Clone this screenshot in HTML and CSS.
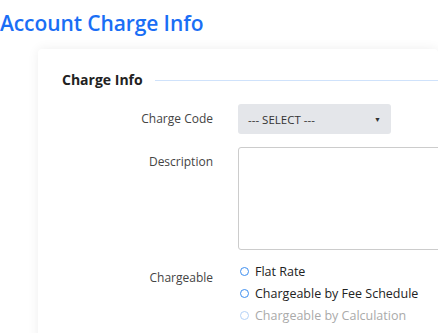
FILE: index.html
```html
<!DOCTYPE html>
<html lang="en">
<head>
    <meta charset="UTF-8">
    <meta name="viewport" content="width=device-width, initial-scale=1.0">
    <title>Account Charge Info</title>
    <link rel="stylesheet" href="styles.css">
</head>
<body>
    <h1 class="page-title">Account Charge Info</h1>
    <div class="card">
        <div class="section-title">
            <span>Charge Info</span>
            <span class="section-line"></span>
        </div>
        <div class="form-row first-row">
            <label class="form-label" for="chargeCode">Charge Code</label>
            <div class="select-box" id="chargeCode">
                <span>--- SELECT ---</span>
                <span class="select-arrow">&#9660;</span>
            </div>
        </div>
        <div class="form-row">
            <label class="form-label label-top" for="description">Description</label>
            <textarea class="text-box" id="description"></textarea>
        </div>
        <div class="form-row radio-row">
            <label class="form-label label-radio">Chargeable</label>
            <div class="radio-group">
                <label class="radio-item"><span class="radio-dot"></span>Flat Rate</label>
                <label class="radio-item"><span class="radio-dot"></span>Chargeable by Fee Schedule</label>
                <label class="radio-item disabled"><span class="radio-dot"></span>Chargeable by Calculation</label>
            </div>
        </div>
    </div>
</body>
</html>
```

FILE: styles.css
```css
/* Basic styles */
body {
    font-family: "Open Sans", "Noto Sans", sans-serif;
    margin: 0;
    padding: 0;
    background-color: #fff;
    overflow: hidden;
}

.page-title {
    margin: 0;
    padding: 9px 0 0 0;
    font-size: 21px;
    line-height: 28px;
    font-weight: 600;
    color: #1a6ef5;
    letter-spacing: -0.1px;
}

.card {
    margin: 12px 0 0 38px;
    padding: 20px 0 20px 24px;
    background-color: #fff;
    border-radius: 4px;
    box-shadow: 0 0 12px rgba(0, 0, 0, 0.07);
}

/* Section heading */
.section-title {
    display: flex;
    align-items: center;
    gap: 12px;
    font-size: 14px;
    font-weight: 700;
    color: #222;
    line-height: 22px;
}

.section-line {
    flex: 1;
    height: 1px;
    background-color: #cfe2fb;
}

/* Form rows */
.form-row {
    display: grid;
    grid-template-columns: 151px 1fr;
    column-gap: 25px;
    align-items: start;
    margin-top: 13px;
}

.first-row {
    margin-top: 13px;
}

.radio-row {
    margin-top: 10px;
}

.form-label {
    text-align: right;
    font-size: 12px;
    color: #444;
    line-height: 30px;
}

.label-top {
    line-height: 18px;
    padding-top: 6px;
}

.label-radio {
    line-height: 18px;
    padding-top: 9px;
}

.select-box {
    display: flex;
    justify-content: space-between;
    align-items: center;
    width: 153px;
    height: 30px;
    padding: 0 10px;
    box-sizing: border-box;
    background-color: #e4e6ea;
    border-radius: 3px;
    font-size: 11.5px;
    color: #333;
}

.select-arrow {
    font-size: 7px;
    color: #333;
}

.text-box {
    display: block;
    width: calc(100% + 40px);
    height: 103px;
    box-sizing: border-box;
    border: 1px solid #ccc;
    border-radius: 3px;
    resize: none;
    margin: 0;
}

/* Radio list */
.radio-group {
    display: flex;
    flex-direction: column;
}

.radio-item {
    display: flex;
    align-items: center;
    gap: 6px;
    height: 22px;
    font-size: 12.5px;
    color: #222;
    padding-left: 2px;
}

.radio-dot {
    width: 7px;
    height: 7px;
    border: 1.5px solid #3d8ef0;
    border-radius: 50%;
}

.radio-item.disabled {
    color: #aaa;
}

.radio-item.disabled .radio-dot {
    border-color: #b4d2f7;
}
```
